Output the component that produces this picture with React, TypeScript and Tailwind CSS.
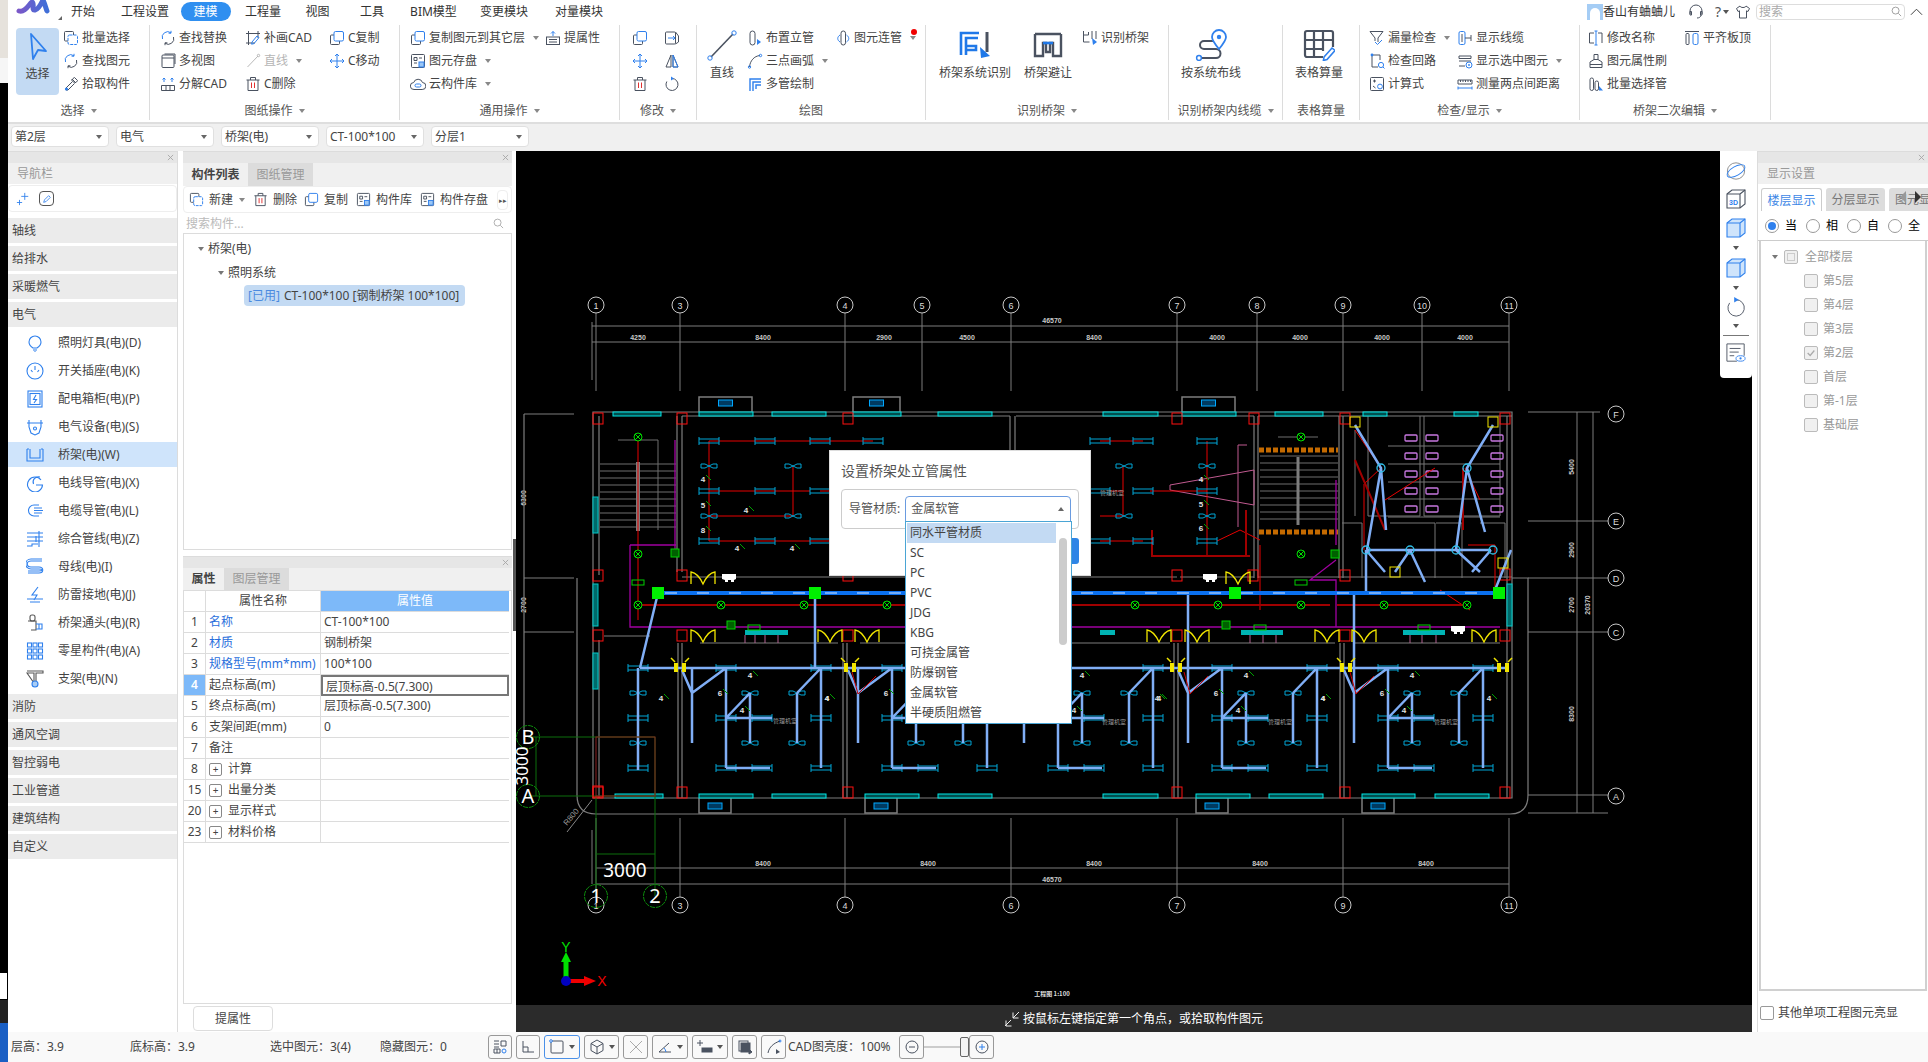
import React from 'react';

const D = '#4a5260';
const B = '#2f80ed';
const R = '#e03030';

/* ---------- small ribbon icons, 16 box ---------- */
const ICONS: Record<string, React.ReactNode> = {
  copy: (<><rect x="1.5" y="5" width="9" height="9.5" rx="1" stroke={D} /><rect x="5" y="1.5" width="9.5" height="9.5" rx="1.5" stroke={B} fill="#fff" /></>),
  batch: (<><rect x="1.5" y="1.5" width="9" height="9.5" rx="1" stroke={D} /><rect x="5" y="5" width="9.5" height="9.5" rx="1.5" stroke={B} fill="#fff" strokeDasharray="3 1" /></>),
  replace: (<><path d="M2.5 9A5.5 5.5 0 0 1 11 2.8M11 .8v2.4H8.6" stroke={B} /><path d="M13.5 7A5.5 5.5 0 0 1 5 13.2M5 15.2v-2.4h2.4" stroke={D} /></>),
  pick: (<><path d="M9 3l4 4M10 2.5l1.5-1 3 3-1 1.5-2 1-3-3zM9.5 5.5L3 12v2h2l6.5-6.5" stroke={D} /><circle cx="3.5" cy="13" r="1.6" fill={B} /></>),
  multi: (<><rect x="2" y="2" width="12" height="12.5" rx="1" stroke={D} /><path d="M2 5h12M4.5 1h10.5v10" stroke={D} /></>),
  explode: (<><path d="M1.5 9.5h13v5h-13zM6 9.5v5M10 9.5v5" stroke={D} /><path d="M4 6V2M2.5 3.5L4 2l1.5 1.5M12 6V2M10.5 3.5L12 2l1.5 1.5" stroke={B} /></>),
  patch: (<><path d="M1 3.5h14M1 13h9M3.5 1v14M13 1v7" stroke={D} /><path d="M7 12l5-6 2 1.6-5 6-2.4.6z" stroke={B} /></>),
  linegray: (<><path d="M2.5 14L13 3" stroke="#b8b8b8" /><circle cx="13.5" cy="2.5" r="1.2" stroke="#b8b8b8" /></>),
  trash: (<><path d="M3 4v10.5h10V4M1.5 4h13M5.5 4V1.5h5V4" stroke={D} /><path d="M6.5 6.5v5.5M9.5 6.5v5.5" stroke={R} /></>),
  move: (<><path d="M8 1v14M1 8h14M6 3l2-2 2 2M6 13l2 2 2-2M3 6L1 8l2 2M13 6l2 2-2 2" stroke={B} /></>),
  mirror: (<><path d="M7 2L2 14h5zM9 2l5 12H9z" stroke={D} /><path d="M9 2l5 12H9z" stroke={B} /></>),
  flip: (<><rect x="1.5" y="2" width="10" height="12" rx="1" stroke={D} /><path d="M4 8h7M9 6l2 2-2 2" stroke={B} /><path d="M11.5 2l3 4v6l-3 2" stroke={D} /></>),
  rotate: (<><path d="M8 2.5a6 6 0 1 1-5.2 3" stroke={D} /><path d="M7 .5L10 2.5 7 4.5z" fill={B} /></>),
  store: (<><rect x="1.5" y="1.5" width="13" height="13" rx="1" stroke={D} /><path d="M4 4.5h3v3H4zM9 5h3M4 10h3" stroke={D} /><rect x="9" y="9" width="5" height="5" fill="#9cc7f5" stroke={B} /></>),
  cloud: (<><path d="M4 13.5a3.5 3.5 0 0 1-.3-7 4.6 4.6 0 0 1 8.8 0 3.5 3.5 0 0 1-.3 7z" stroke={D} /><rect x="5" y="8" width="6" height="3" rx="1.5" stroke={B} /></>),
  attr: (<><path d="M8 6V1.5M6 3.5l2-2 2 2" stroke={B} /><rect x="1.5" y="7" width="13" height="7.5" stroke={D} /><path d="M4 9.5h8M4 12h8" stroke={D} /></>),
  riser: (<><rect x="3" y="1" width="5" height="14" rx="2.5" stroke={D} /><path d="M10 9l4 3-4 3z" fill={B} /></>),
  arc: (<><path d="M2.5 14C3 8 7 3 13 2.5" stroke={D} /><circle cx="13.5" cy="2.5" r="1.2" stroke={B} /><circle cx="2.5" cy="14" r="1.2" stroke={B} /></>),
  multipipe: (<><path d="M3 15V3h11M6 15V6h8M9 13V9h5" stroke={B} strokeWidth="1.4" /></>),
  connect: (<><rect x="6" y="1" width="4.5" height="14" rx="2.2" stroke={D} /><path d="M5 5C2 7 2 10 5 12M11.5 5c3 2 3 5 0 7" stroke={B} /></>),
  trayid: (<><path d="M1.5 5h5v-3M1.5 1v11h6M14 1v8M10 1v8" stroke={D} /><path d="M10 8l5 4-4 3z" fill={B} /></>),
  funnel: (<><path d="M1 1.5h13L9 8v4" stroke={D} /><path d="M6 8L1 1.5M6 8v3" stroke={D} /><path d="M6 12l2.5 2.5L13 10" stroke={B} /></>),
  cable: (<><rect x="2" y="1.5" width="6" height="13" rx="1.5" stroke={B} /><path d="M5 4v8M8 8h6M14 5v6" stroke={D} /></>),
  circuit: (<><path d="M3 2v12h6M3 2h8v5" stroke={D} /><circle cx="3" cy="2" r="1.4" fill={B} /><circle cx="12" cy="12" r="2.6" stroke={B} /><path d="M14 14l1.5 1.5" stroke={B} /></>),
  showsel: (<><path d="M2 3h12M2 3v2.5h12V3M2 8h12M2 13h6" stroke={D} /><circle cx="12" cy="12" r="3" stroke={B} /><circle cx="12" cy="12" r=".9" fill={B} /></>),
  formula: (<><rect x="1.5" y="1.5" width="13" height="13" rx="1" stroke={D} /><path d="M4 5h3M5.5 3.5v3M4 10l2.5 2" stroke={D} /><circle cx="11" cy="10.5" r="2.4" stroke={B} /></>),
  measure: (<><path d="M1 4h14v4H1zM3.5 4v2M6 4v2M8.5 4v2M11 4v2M13.5 4v2" stroke={D} /><path d="M1 12h14M1 10.5v3M15 10.5v3" stroke={B} /></>),
  rename: (<><path d="M6 3H1.5v10H6M10 3h4v10" stroke={D} /><path d="M8 1v14M6.5 1h3M6.5 15h3" stroke={B} /></>),
  brush: (<><path d="M6 1.5h4v5H6zM2 9l4-2.5h4L14 9v5.5H2zM2 11.5h12" stroke={D} /></>),
  alignpipe: (<><path d="M1 1.5h14" stroke={D} /><rect x="2" y="3.5" width="3" height="11" rx="1" stroke={D} /><rect x="9" y="3.5" width="5" height="11" rx="1.5" stroke={B} /></>),
  batchpipe: (<><rect x="2" y="2" width="3.5" height="12.5" rx="1.7" stroke={D} /><rect x="7" y="5" width="3.5" height="9.5" rx="1.7" stroke={D} /><path d="M11 10l4 4.5h-4z" fill={B} /></>),
};

function Ico({ name, className = 'w-4 h-4' }: { name: string; className?: string }) {
  return (
    <svg viewBox="0 0 16 16" fill="none" className={`${className} shrink-0`}>
      {ICONS[name]}
    </svg>
  );
}

function Caret({ className = 'border-t-[#888]' }: { className?: string }) {
  return <span className={`inline-block w-0 h-0 border-x-[3px] border-x-transparent border-t-[4px] ${className}`} />;
}

function Item({ icon, label, caret, muted }: { icon: string; label: string; caret?: boolean; muted?: boolean }) {
  return (
    <div className={`flex items-center h-[22px] gap-[3px] whitespace-nowrap ${muted ? 'text-[#b5b5b5]' : 'text-[#444]'}`}>
      <Ico name={icon} />
      <span>{label}</span>
      {caret && <span className="ml-[5px] flex"><Caret /></span>}
    </div>
  );
}

function Col({ width, items }: { width: string; items: { icon: string; label: string; caret?: boolean; muted?: boolean }[] }) {
  return (
    <div className={`flex flex-col gap-px shrink-0 ${width}`}>
      {items.map((it) => (
        <Item key={it.label} {...it} />
      ))}
    </div>
  );
}

function Group({ width, label, caret = true, children, className = '' }: { width: string; label: string; caret?: boolean; children: React.ReactNode; className?: string }) {
  return (
    <div className={`flex flex-col shrink-0 h-[95px] border-r border-[#dcdcdc] ${width}`}>
      <div className={`flex flex-1 pt-[2px] ${className}`}>{children}</div>
      <div className="h-[19px] flex items-center justify-center gap-[6px] text-[#555] whitespace-nowrap">
        {label}
        {caret && <Caret />}
      </div>
    </div>
  );
}

function BigBtn({ width, label, children }: { width: string; label: string; children: React.ReactNode }) {
  return (
    <div className={`flex flex-col items-center shrink-0 ${width}`}>
      <div className="h-[32px] mt-[2px] flex items-center justify-center">{children}</div>
      <span className="mt-[3px] text-[#444] whitespace-nowrap">{label}</span>
    </div>
  );
}

function Ribbon() {
  return (
    <div className="h-[101px] flex items-start pt-[2px] bg-white border-b-2 border-[#dedede] shrink-0">
      <Group width="w-[142px]" label="选择" className="pl-[8px]">
        <div className="w-[43px] h-[67px] mt-[1px] rounded-sm bg-[#c3daf3] flex flex-col items-center shrink-0 text-[#444]">
          <svg viewBox="0 0 24 32" className="w-[24px] h-[32px] mt-[3px]" fill="none">
            <path d="M5 3l15 17-8-1-5 9z" stroke="#2f80ed" strokeWidth="1.8" strokeLinejoin="round" />
          </svg>
          <span className="mt-[2px]">选择</span>
        </div>
        <div className="ml-[4px]">
          <Col width="w-[80px]" items={[{ icon: 'batch', label: '批量选择' }, { icon: 'replace', label: '查找图元' }, { icon: 'pick', label: '拾取构件' }]} />
        </div>
      </Group>
      <Group width="w-[250px]" label="图纸操作" className="pl-[10px]">
        <Col width="w-[85px]" items={[{ icon: 'replace', label: '查找替换' }, { icon: 'multi', label: '多视图' }, { icon: 'explode', label: '分解CAD' }]} />
        <Col width="w-[84px]" items={[{ icon: 'patch', label: '补画CAD' }, { icon: 'linegray', label: '直线', caret: true, muted: true }, { icon: 'trash', label: 'C删除' }]} />
        <Col width="w-[60px]" items={[{ icon: 'copy', label: 'C复制' }, { icon: 'move', label: 'C移动' }]} />
      </Group>
      <Group width="w-[220px]" label="通用操作" className="pl-[10px]">
        <Col width="w-[135px]" items={[{ icon: 'copy', label: '复制图元到其它层', caret: true }, { icon: 'store', label: '图元存盘', caret: true }, { icon: 'cloud', label: '云构件库', caret: true }]} />
        <Col width="w-[60px]" items={[{ icon: 'attr', label: '提属性' }]} />
      </Group>
      <Group width="w-[77px]" label="修改" className="pl-[12px]">
        <div className="grid grid-cols-2 gap-x-[16px] w-[48px] auto-rows-[22px] gap-y-px items-center">
          <Ico name="copy" /><Ico name="flip" />
          <Ico name="move" /><Ico name="mirror" />
          <Ico name="trash" /><Ico name="rotate" />
        </div>
      </Group>
      <Group width="w-[229px]" label="绘图" caret={false} className="pl-[10px]">
        <BigBtn width="w-[30px]" label="直线">
          <svg viewBox="0 0 30 32" className="w-[30px] h-[32px]" fill="none">
            <path d="M4 28L26 5" stroke={D} strokeWidth="1.6" />
            <circle cx="27" cy="4" r="2.2" stroke={B} /><circle cx="3" cy="29" r="2.2" stroke={B} />
          </svg>
        </BigBtn>
        <div className="w-[10px] shrink-0" />
        <Col width="w-[88px]" items={[{ icon: 'riser', label: '布置立管' }, { icon: 'arc', label: '三点画弧', caret: true }, { icon: 'multipipe', label: '多管绘制' }]} />
        <div className="relative">
          <Col width="w-[80px]" items={[{ icon: 'connect', label: '图元连管', caret: true }]} />
          <span className="absolute left-[76px] top-[2px] w-[6px] h-[6px] rounded-full bg-[#f00000]" />
        </div>
      </Group>
      <Group width="w-[243px]" label="识别桥架" className="pl-[13px]">
        <BigBtn width="w-[72px]" label="桥架系统识别">
          <svg viewBox="0 0 32 32" className="w-[32px] h-[32px]" fill="none">
            <path d="M2 26V4h18M7 26V9h12M7 17h10v4h-10" stroke="#1f78e8" strokeWidth="2.6" />
            <path d="M28 3v20" stroke={D} strokeWidth="3" />
            <path d="M21 18l10 9-9 2z" fill="#1f78e8" />
          </svg>
        </BigBtn>
        <div className="w-[13px] shrink-0" />
        <BigBtn width="w-[48px]" label="桥架避让">
          <svg viewBox="0 0 32 32" className="w-[32px] h-[32px]" fill="none">
            <path d="M3 5h26M3 5v22h8V14h3v9h4v-9h3v13h8V5" stroke={D} strokeWidth="2.4" />
            <path d="M11 14h10" stroke="#1f78e8" strokeWidth="2.6" />
          </svg>
        </BigBtn>
        <div className="w-[10px] shrink-0" />
        <Col width="w-[70px]" items={[{ icon: 'trayid', label: '识别桥架' }]} />
      </Group>
      <Group width="w-[114px]" label="识别桥架内线缆" className="pl-[12px]">
        <BigBtn width="w-[60px]" label="按系统布线">
          <svg viewBox="0 0 32 32" className="w-[32px] h-[32px]" fill="none">
            <path d="M4 29h17a4 4 0 0 0 0-9H9a4 4 0 0 1 0-8h9" stroke={D} strokeWidth="2" />
            <circle cx="4" cy="29" r="2.4" stroke={B} strokeWidth="1.5" fill="#fff" />
            <path d="M24 20c-5-6-7-9-7-12a7 7 0 0 1 14 0c0 3-2 6-7 12z" stroke={B} strokeWidth="1.8" fill="#fff" />
            <circle cx="24" cy="8" r="2.2" fill={B} />
          </svg>
        </BigBtn>
      </Group>
      <Group width="w-[77px]" label="表格算量" caret={false} className="justify-center pr-[4px]">
        <BigBtn width="w-[50px]" label="表格算量">
          <svg viewBox="0 0 32 32" className="w-[32px] h-[32px]" fill="none">
            <path d="M20 28H4a2 2 0 0 1-2-2V4a2 2 0 0 1 2-2h24a2 2 0 0 1 2 2v14M2 11h28M2 20h19M11 2v26M20 2v20" stroke={D} strokeWidth="2.2" />
            <path d="M21 28l8-9 3 2.5-8 9-3.6 1z" stroke={B} strokeWidth="1.6" />
          </svg>
        </BigBtn>
      </Group>
      <Group width="w-[220px]" label="检查/显示" className="pl-[9px]">
        <Col width="w-[88px]" items={[{ icon: 'funnel', label: '漏量检查', caret: true }, { icon: 'circuit', label: '检查回路' }, { icon: 'formula', label: '计算式' }]} />
        <Col width="w-[118px]" items={[{ icon: 'cable', label: '显示线缆' }, { icon: 'showsel', label: '显示选中图元', caret: true }, { icon: 'measure', label: '测量两点间距离' }]} />
      </Group>
      <Group width="w-[191px]" label="桥架二次编辑" className="pl-[8px]">
        <Col width="w-[96px]" items={[{ icon: 'rename', label: '修改名称' }, { icon: 'brush', label: '图元属性刷' }, { icon: 'batchpipe', label: '批量选择管' }]} />
        <Col width="w-[80px]" items={[{ icon: 'alignpipe', label: '平齐板顶' }]} />
      </Group>
    </div>
  );
}

const MENU = [
  { t: '开始', w: 'w-[62px]' },
  { t: '工程设置', w: 'w-[62px]' },
  { t: '建模', w: 'w-[59px]', active: true },
  { t: '工程量', w: 'w-[56px]' },
  { t: '视图', w: 'w-[53px]' },
  { t: '工具', w: 'w-[56px]' },
  { t: 'BIM模型', w: 'w-[67px]' },
  { t: '变更模块', w: 'w-[74px]' },
  { t: '对量模块', w: 'w-[76px]' },
];

function MenuBar() {
  return (
    <div className="h-[23px] flex items-center bg-white shrink-0">
      <div className="w-[44px] h-full relative shrink-0">
        <svg viewBox="0 0 34 18" className="absolute left-[8px] top-0 w-[34px] h-[18px]" fill="none">
          <defs>
            <linearGradient id="logo" x1="0" y1="0" x2="1" y2="0">
              <stop offset="0" stopColor="#7a58c8" /><stop offset="1" stopColor="#3f6fd8" />
            </linearGradient>
          </defs>
          <path d="M3 11C9 13 13 4 16 2c3 1-1 9 3 8 4-1 6-6 8-10 2 4 3 9 4 11" stroke="url(#logo)" strokeWidth="5" strokeLinecap="round" />
        </svg>
        <span className="absolute right-[-10px] bottom-[3px] w-0 h-0 border-l-[4px] border-l-transparent border-b-[4px] border-b-[#666]" />
      </div>
      {MENU.map((m) => (
        <div key={m.t} className={`${m.w} flex justify-center shrink-0 text-[#333]`}>
          {m.active ? <span className="w-[50px] h-[19px] rounded-[10px] bg-[#2f8ff0] text-white text-center leading-[19px]">{m.t}</span> : m.t}
        </div>
      ))}
      <div className="ml-auto flex items-center">
        <div className="w-[16px] h-[16px] bg-[#a5cdf5] flex items-end justify-center overflow-hidden">
          <span className="w-[10px] h-[12px] rounded-t-full bg-white" />
        </div>
        <span className="w-[72px] text-[#333] text-center whitespace-nowrap">香山有蛐蛐儿</span>
        <svg viewBox="0 0 16 16" className="w-4 h-4 ml-[13px]" fill="none" stroke={D}>
          <path d="M2 10V7a6 6 0 0 1 12 0v3M2 7.5h1.5V11H2zM12.5 7.5H14V11h-1.5zM13 11c0 2-2 3-4 3" />
        </svg>
        <span className="ml-[11px] text-[14px] text-[#555]">?</span>
        <span className="ml-[2px] flex"><Caret className="border-t-[#555]" /></span>
        <svg viewBox="0 0 16 16" className="w-4 h-4 ml-[6px]" fill="none" stroke={D}>
          <path d="M5 2L1.5 4.5 3 7.5l1.5-.7V14h7V6.8l1.5.7 1.500-3L11 2c-.5 2-5.500 2-6 0z" />
        </svg>
        <div className="ml-[5px] w-[149px] h-[16px] rounded-sm border border-[#ddd] flex items-center justify-between px-[2px] text-[#aaa]">
          搜索
          <svg viewBox="0 0 12 12" className="w-[11px] h-[11px]" fill="none" stroke="#999">
            <circle cx="5" cy="5" r="3.8" /><path d="M8 8l3 3" />
          </svg>
        </div>
        <div className="w-[23px] flex justify-center">
          <svg viewBox="0 0 14 8" className="w-[13px] h-[8px]" fill="none" stroke="#333"><path d="M1 7l6-6 6 6" /></svg>
        </div>
      </div>
    </div>
  );
}

function ComboBar() {
  const combos = ['第2层', '电气', '桥架(电)', 'CT-100*100', '分层1'];
  return (
    <div className="h-[27px] bg-[#f0f0f0] flex items-start pt-[2px] pl-[3px] gap-[7px] shrink-0">
      {combos.map((c) => (
        <div key={c} className="w-[98px] h-[21px] px-[3px] rounded-sm bg-white border border-[#e0e0e0] flex items-center justify-between text-[#444]">
          {c}
          <span className="mr-[3px] flex"><Caret className="border-t-[#666]" /></span>
        </div>
      ))}
    </div>
  );
}

/* ---------- navigation ---------- */
const NAV_ICON: Record<string, React.ReactNode> = {
  bulb: <><path d="M7 14c-3-2-4-4-4-6a6 6 0 0 1 12 0c0 2-1 4-4 6z" /><path d="M7 16h4M8 18h2" /></>,
  socket: <><circle cx="9" cy="9" r="8" /><path d="M9 4v4M5 8l1.500 2M13 8l-1.500 2" /></>,
  box: <><rect x="2" y="1" width="14" height="16" /><rect x="4" y="3.500" width="10" height="11" /><path d="M10 5L7.500 9.500h3L8 13" /></>,
  device: <><path d="M1 5h16M3 5V2M15 5V2M3 5v4l2 6 4 2 4-2 2-6V5" /><circle cx="9" cy="10.500" r="1.500" /></>,
  tray: <><path d="M1 3v12h16V3M1 3h2M15 3h2M4 3v9h10V3" /></>,
  conduit: <><path d="M15 6a7.500 7.500 0 1 0 1.500 5H10" /><path d="M14 3C9 2 6 6 7.500 10" /></>,
  cable: <><path d="M13 3H8a5 5 0 0 0 0 11h5M8 8.500h9M8 6h8M8 11h8" /></>,
  combo: <><path d="M1 3h16M1 7h16M1 11h16M1 16h5v-2h6M13 1v16M10 6v6" /></>,
  bus: <><path d="M16 3H5c-5 0-5 6 0 6h8c5 0 5 6 0 6H2" /><path d="M16 1H5C-2 1-2 11 5 11h8c5 0 3 2 0 2H2" /></>,
  bolt: <><path d="M12 1L6 9h5l-3 5M1 13h16M4 16h10" /></>,
  joint: <><rect x="4" y="1" width="5" height="6" rx="2" stroke="#555" /><path d="M2 7h8v9H5" stroke="#555" /><path d="M10 10h6v5h-6M13 10v5" /></>,
  grid: <><rect x="1.500" y="1" width="4" height="4" /><rect x="7" y="1" width="4" height="4" /><rect x="12.500" y="1" width="4" height="4" /><rect x="1.500" y="7" width="4" height="4" /><rect x="7" y="7" width="4" height="4" /><rect x="12.500" y="7" width="4" height="4" /><rect x="1.500" y="13" width="4" height="4" /><rect x="7" y="13" width="4" height="4" /><rect x="12.500" y="13" width="4" height="4" /></>,
  bracket: <><path d="M1 1h16v2h-7v10M8 13V3H1z" stroke="#555" /><circle cx="9" cy="14" r="3" fill="#a9cdf5" /></>,
};

const NAV_ITEMS = [
  { icon: 'bulb', t: '照明灯具(电)(D)' },
  { icon: 'socket', t: '开关插座(电)(K)' },
  { icon: 'box', t: '配电箱柜(电)(P)' },
  { icon: 'device', t: '电气设备(电)(S)' },
  { icon: 'tray', t: '桥架(电)(W)', on: true },
  { icon: 'conduit', t: '电线导管(电)(X)' },
  { icon: 'cable', t: '电缆导管(电)(L)' },
  { icon: 'combo', t: '综合管线(电)(Z)' },
  { icon: 'bus', t: '母线(电)(I)' },
  { icon: 'bolt', t: '防雷接地(电)(J)' },
  { icon: 'joint', t: '桥架通头(电)(R)' },
  { icon: 'grid', t: '零星构件(电)(A)' },
  { icon: 'bracket', t: '支架(电)(N)' },
];

function TitleBar() {
  return (
    <div className="h-[12px] bg-[#e6e6e6] flex items-center justify-end pr-[3px] shrink-0 border-t border-[#dcdcdc]">
      <svg viewBox="0 0 8 8" className="w-[7px] h-[7px]" fill="none" stroke="#a5a5a5"><path d="M1 1l6 6M7 1L1 7" /></svg>
    </div>
  );
}

function Section({ t }: { t: string }) {
  return <div className="h-[25px] bg-[#ebebeb] pl-[4px] leading-[25px] text-[#444]">{t}</div>;
}

function NavPanel() {
  return (
    <div className="w-[170px] flex flex-col shrink-0 border-r border-[#dcdcdc]">
      <TitleBar />
      <div className="h-[21px] bg-[#f0f0f0] pl-[9px] leading-[21px] text-[#999] shrink-0">导航栏</div>
      <div className="h-[27px] mt-px rounded-sm border border-[#eee] flex items-center pl-[7px] gap-[9px] shrink-0">
        <svg viewBox="0 0 16 16" className="w-[14px] h-[14px]" fill="none" stroke={B}><path d="M10 1v8M6 5h8M4 9v6M1 12h6" /></svg>
        <span className="w-[15px] h-[15px] rounded-sm border border-[#555] flex items-center justify-center">
          <svg viewBox="0 0 12 12" className="w-[10px] h-[10px]" fill="none" stroke={B}><path d="M2 10l1-3 5-5 2 2-5 5z" /></svg>
        </span>
      </div>
      <div className="flex flex-col gap-[3px] mt-[6px]">
        {['轴线', '给排水', '采暖燃气', '电气'].map((t) => <Section key={t} t={t} />)}
        {NAV_ITEMS.map((n) => (
          <div key={n.t} className={`h-[25px] flex items-center pl-[18px] gap-[14px] text-[#444] ${n.on ? 'bg-[#cfe4fb]' : ''}`}>
            <svg viewBox="0 0 18 18" className="w-[18px] h-[18px] shrink-0" fill="none" stroke={B} strokeWidth="1.100">{NAV_ICON[n.icon]}</svg>
            {n.t}
          </div>
        ))}
        {['消防', '通风空调', '智控弱电', '工业管道', '建筑结构', '自定义'].map((t) => <Section key={t} t={t} />)}
      </div>
    </div>
  );
}

/* ---------- component list and properties ---------- */
const PROPS = [
  { n: '1', k: '名称', v: 'CT-100*100', blue: true },
  { n: '2', k: '材质', v: '钢制桥架', blue: true },
  { n: '3', k: '规格型号(mm*mm)', v: '100*100', blue: true },
  { n: '4', k: '起点标高(m)', v: '层顶标高-0.5(7.300)', sel: true },
  { n: '5', k: '终点标高(m)', v: '层顶标高-0.5(7.300)' },
  { n: '6', k: '支架间距(mm)', v: '0' },
  { n: '7', k: '备注', v: '' },
  { n: '8', k: '计算', v: '', plus: true },
  { n: '15', k: '出量分类', v: '', plus: true },
  { n: '20', k: '显示样式', v: '', plus: true },
  { n: '23', k: '材料价格', v: '', plus: true },
];

function ToolBtn({ icon, label, className }: { icon: string; label: string; className: string }) {
  return (
    <div className={`flex items-center gap-[5px] shrink-0 text-[#444] ${className}`}>
      <Ico name={icon} className="w-[15px] h-[15px]" />
      {label}
    </div>
  );
}

function MiddlePanel() {
  return (
    <div className="w-[329px] flex flex-col shrink-0">
      <TitleBar />
      <div className="h-[23px] bg-[#f0f0f0] flex shrink-0">
        <div className="w-[65px] font-semibold text-center leading-[23px] text-[#444]">构件列表</div>
        <div className="w-[65px] bg-[#dcdcdc] text-center leading-[23px] text-[#999]">图纸管理</div>
      </div>
      <div className="h-[27px] flex items-center pl-[5px] rounded-sm border border-[#eee] shrink-0 relative">
        <ToolBtn icon="batch" label="新建" className="w-[64px]" />
        <span className="absolute left-[55px] flex"><Caret /></span>
        <ToolBtn icon="trash" label="删除" className="w-[51px]" />
        <ToolBtn icon="copy" label="复制" className="w-[52px]" />
        <ToolBtn icon="store" label="构件库" className="w-[64px]" />
        <ToolBtn icon="store" label="构件存盘" className="w-[75px]" />
        <span className="w-[11px] h-[20px] ml-[2px] rounded-sm border border-[#eee] text-[#555] text-[7px] leading-[20px] text-center">▸▸</span>
      </div>
      <div className="h-[19px] mt-px flex items-center justify-between px-[3px] text-[#bbb] shrink-0">
        搜索构件...
        <svg viewBox="0 0 12 12" className="w-[11px] h-[11px] mr-[5px]" fill="none" stroke="#aaa"><circle cx="5" cy="5" r="3.800" /><path d="M8 8l3 3" /></svg>
      </div>
      <div className="h-[317px] border border-[#dcdcdc] flex flex-col pt-[3px] shrink-0 text-[#444]">
        <div className="h-[24px] flex items-center pl-[14px] gap-[4px]"><Caret className="border-t-[#777]" />桥架(电)</div>
        <div className="h-[24px] flex items-center pl-[34px] gap-[4px]"><Caret className="border-t-[#777]" />照明系统</div>
        <div className="ml-[60px] w-[221px] h-[21px] rounded-sm bg-[#c3daf3] flex items-center pl-[4px] gap-[4px] whitespace-nowrap">
          <span className="text-[#4a8ae0]">[已用]</span>CT-100*100 [钢制桥架 100*100]
        </div>
      </div>
      <div className="mt-[6px]"><TitleBar /></div>
      <div className="h-[22px] bg-[#f0f0f0] flex shrink-0">
        <div className="w-[41px] font-semibold text-center leading-[22px] text-[#444]">属性</div>
        <div className="w-[65px] bg-[#dcdcdc] text-center leading-[22px] text-[#999]">图层管理</div>
      </div>
      <div className="h-[414px] border border-[#dcdcdc] shrink-0 pr-[2px]">
        <div className="grid grid-cols-[22px_115px_188px] auto-rows-[21px] text-[#444]">
          <div className="border-b border-r border-[#dcdcdc]" />
          <div className="border-b border-r border-[#dcdcdc] text-center leading-[20px]">属性名称</div>
          <div className="bg-[#7db9f9] border-b border-[#dcdcdc] text-center text-white leading-[20px]">属性值</div>
          {PROPS.map((p) => (
            <React.Fragment key={p.n}>
              <div className={`border-b border-r border-[#dcdcdc] text-center leading-[20px] ${p.sel ? 'bg-[#7db9f9] text-white font-semibold' : ''}`}>{p.n}</div>
              <div className={`border-b border-r border-[#dcdcdc] pl-[3px] flex items-center whitespace-nowrap ${p.blue ? 'text-[#2a6fdc]' : ''}`}>
                {p.plus && (
                  <span className="w-[13px] h-[13px] mr-[6px] rounded-[2px] border border-[#888] text-[10px] leading-[10px] text-center">+</span>
                )}
                {p.k}
              </div>
              <div className={`pl-[3px] leading-[19px] whitespace-nowrap ${p.sel ? 'border-2 border-[#777] leading-[17px] pl-[2px]' : 'border-b border-[#dcdcdc]'}`}>{p.v}</div>
            </React.Fragment>
          ))}
        </div>
      </div>
      <div className="mt-[2px] ml-[10px] w-[80px] h-[25px] rounded-sm border border-[#ddd] text-center leading-[23px] text-[#444] shrink-0">提属性</div>
    </div>
  );
}

/* ---------- CAD drawing, coordinates are screen pixels ---------- */
const AXIS_X = [596, 680, 845, 922, 1011, 1177, 1257, 1343, 1422, 1509];
const AXIS_T = ['1', '3', '4', '5', '6', '7', '8', '9', '10', '11'];
const AXIS_B = [0, 1, 2, 4, 5, 7, 9];
const GRAY = '#7d7d7d';

const WIN_TOP = [[613, 661], [699, 753], [772, 826], [853, 901], [938, 992], [1103, 1158], [1182, 1236], [1275, 1323], [1363, 1387], [1454, 1478]];
const WIN_BOT = [[615, 663], [699, 753], [772, 826], [865, 919], [938, 992], [1103, 1158], [1196, 1250], [1269, 1323], [1362, 1415], [1435, 1489]];
const COLS = [[598, 418], [682, 418], [848, 418], [1177, 418], [1254, 418], [1345, 418], [1505, 418], [598, 575], [682, 575], [848, 575], [1177, 575], [1253, 575], [1345, 575], [1505, 574], [598, 635], [682, 635], [848, 635], [1177, 635], [1345, 635], [1505, 635], [598, 792], [682, 792], [848, 792], [1177, 792], [1345, 792], [1505, 792]];
const BOX_TOP = [[699, 752], [853, 900], [1182, 1235]];
const BOX_BOT = [[699, 731], [865, 897], [1196, 1228], [1362, 1394]];
const MODULES = [692, 858, 1024, 1188, 1354];
const LAMPS = [638, 721, 804, 887, 1135, 1218, 1301, 1384, 1467];
const DOORS = [[691, 630], [818, 630], [855, 630], [987, 630], [1147, 630], [1185, 630], [1315, 630], [1352, 630], [1472, 630], [691, 572], [1226, 572]];
const TEAL = [[745, 788], [1100, 1115], [1241, 1283], [1403, 1445]];
const PURPLE_X = [1405, 1426, 1491];
const PURPLE_Y = [438, 456, 474, 491, 509];
const ROOM_LABELS = [[785, 723], [1114, 724], [1280, 724], [1446, 724], [1112, 495]];
const UPPER_NUMS = [[703, 482, '4'], [703, 508, '5'], [703, 533, '8'], [746, 513, '4'], [737, 551, '4'], [792, 551, '4'], [1201, 482, '4'], [1201, 507, '5'], [1201, 531, '6']];

function beam(x: number, y: number) {
  return `M${x - 10} ${y - 2}H${x + 10}M${x - 10} ${y + 2}H${x + 10}M${x - 10} ${y - 4}V${y + 4}M${x + 10} ${y - 4}V${y + 4}`;
}
function bow(x: number, y: number) {
  return `M${x - 8} ${y - 2}H${x - 4}L${x + 4} ${y + 2}H${x + 8}V${y - 2}H${x + 4}L${x - 4} ${y + 2}H${x - 8}Z`;
}

function moduleLines() {
  let blue = 'M640 668H1505';
  let cy = '';
  MODULES.forEach((x) => {
    blue += `M${x} 668V743M${x + 34} 668V768M${x + 34} 718H${x + 80}M${x + 34} 768H${x + 78}M${x + 58} 693V743M${x + 105} 693V743M${x + 129} 668V768`;
    blue += `M${x} 693L${x + 34} 668M${x + 34} 718L${x + 58} 693M${x + 105} 693L${x + 129} 668M${x - 10} 670L${x} 693`;
    [[x + 34, 668], [x + 34, 718], [x + 34, 768], [x + 70, 768], [x + 129, 668], [x + 129, 718], [x + 129, 768], [x + 70, 718]].forEach(([a, b]) => { cy += beam(a, b); });
    [[x + 58, 693], [x + 58, 743], [x + 105, 693], [x + 105, 743]].forEach(([a, b]) => { cy += bow(a, b); });
  });
  blue += 'M638 668V770';
  [668, 718, 768].forEach((y) => { cy += beam(638, y); });
  [693, 743].forEach((y) => { cy += bow(638, y); });
  return { blue, cy };
}

function Dim({ x, y, t, r }: { x: number; y: number; t: string; r?: boolean }) {
  return <text x={x} y={y} fill="#c8c8c8" fontSize="7" fontWeight="700" textAnchor="middle" fontFamily="Liberation Sans, sans-serif" transform={r ? `rotate(-90 ${x} ${y})` : undefined}>{t}</text>;
}

function Bubble({ x, y, t }: { x: number; y: number; t: string }) {
  return (
    <g>
      <circle cx={x} cy={y} r="8" stroke="#c8c8c8" fill="#000" />
      <text x={x} y={y + 3.500} fill="#ddd" fontSize="9" textAnchor="middle" fontFamily="Liberation Sans, sans-serif">{t}</text>
    </g>
  );
}

function Num({ x, y, t }: { x: number; y: number; t: string }) {
  return (
    <g>
      <text x={x} y={y} fill="#e0e0e0" fontSize="8" fontWeight="700" textAnchor="middle" fontFamily="Liberation Sans, sans-serif">{t}</text>
      <path d={`M${x + 3} ${y - 7}l5 5`} stroke="#00a000" />
    </g>
  );
}

function CadDrawing() {
  const { blue, cy } = moduleLines();
  const walls =
    'M593 412H1512V798H593ZM599 416V575M677 416V572M682 416V572M682 416H1010M1016 416H1254M1258 416H1512' +
    'M1010 416V575M1015 416V575M1254 416V578M1258 416V578M1339 416V578M1343 416V578M1507 416V798' +
    'M682 577H1010M1015 577H1177M1180 577H1254M1258 577H1512' +
    'M599 640V798M604 636H650M678 643V798M682 643V798M843 643V798M847 643V798M1174 643V798M1178 643V798M1340 643V798M1344 643V798' +
    'M700 643H838M860 643H1000M1020 643H1170M1190 643H1335M1355 643H1500' +
    'M577 578V795Q577 814 596 814H1510Q1528 814 1528 795V578H1512M524 414H574M524 578H574M524 632H574M524 414V740';
  const right =
    'M1528 412H1600M1528 521H1608M1528 578H1608M1528 632H1608M1528 795H1608M1528 813H1608M1577 412V813M1593 412V813' +
    'M592 326H1509M592 342H1509M592 322V380M596 868H1509M596 884H1509M592 830V884';
  let stairs = '';
  for (let y = 464; y <= 530; y += 7) stairs += `M600 ${y}H676`;
  for (let y = 456; y <= 525; y += 7) stairs += `M1260 ${y}H1338`;
  stairs += 'M618 440H658V530M1278 437H1318';
  let bath = 'M1368 416V516H1420V416M1424 416V516H1500V416M1355 430V516M1342 523H1362V578M1390 523H1435V578M1436 523H1462V578M1480 523H1505V578';
  PURPLE_Y.forEach((y) => { bath += `M1388 ${y + 8}H1500`; });
  const reds = 'M709 441H873M709 441V541M709 491H810M709 516H793M793 466V516M709 541H873M638 440V620M820 491H873' +
    'M1100 441H1143M1207 441V555M1100 541H1143M1123 466V516M1100 516H1123M1123 491H1110M1150 491H1207M1217 541L1240 530 1260 540' +
    'M1355 430L1381 468 1364 484V550M1435 468 1385 500M1465 468L1480 500M1468 545H1495V590M1440 590L1470 610M1260 545V610';
  const darkred = 'M638 605H1330M1337 605H1467M1152 530V556H1250M1246 510V556M1355 460L1385 530M1463 468V530';
  const lightBlue = 'M1355 425L1381 468 1367 550M1381 468L1386 530M1366 550H1491M1366 550V593M1467 468L1456 550M1493 425L1467 468 1485 532M1366 550L1385 572M1410 550L1395 572M1410 550L1425 582M1456 550L1480 572M1491 550L1472 572M1511 550L1495 590' +
    'M1188 593V668M1354 593V668M815 593V668M658 593L640 668';
  return (
    <svg viewBox="516 151 1236 854" className="block w-full h-full" fill="none">
      <path d={right} stroke={GRAY} />
      {AXIS_X.map((x) => <path key={x} d={`M${x} 313V391`} stroke={GRAY} />)}
      {AXIS_B.map((i) => <path key={i} d={`M${AXIS_X[i]} 818V897`} stroke={GRAY} />)}
      {AXIS_X.map((x, i) => <Bubble key={x} x={x} y={305} t={AXIS_T[i]} />)}
      {AXIS_B.map((i) => <Bubble key={i} x={AXIS_X[i]} y={905} t={AXIS_T[i]} />)}
      {[['F', 414], ['E', 521], ['D', 578], ['C', 632], ['A', 796]].map(([t, y]) => <Bubble key={t as string} x={1616} y={y as number} t={t as string} />)}
      {[[638, '4250'], [763, '8400'], [884, '2900'], [967, '4500'], [1094, '8400'], [1217, '4000'], [1300, '4000'], [1382, '4000'], [1465, '4000']].map(([x, t]) => <Dim key={t as string + x} x={x as number} y={340} t={t as string} />)}
      <Dim x={1052} y={323} t="46570" />
      <Dim x={763} y={866} t="8400" /><Dim x={928} y={866} t="8400" /><Dim x={1094} y={866} t="8400" /><Dim x={1260} y={866} t="8400" /><Dim x={1426} y={866} t="8400" />
      <Dim x={1052} y={882} t="46570" />
      <Dim x={526} y={498} t="6300" r /><Dim x={526} y={605} t="2700" r /><Dim x={1574} y={467} t="5400" r /><Dim x={1574} y={550} t="2900" r /><Dim x={1574} y={605} t="2700" r /><Dim x={1574} y={714} t="8300" r /><Dim x={1590} y={605} t="20370" r />
      <path d={walls} stroke={GRAY} strokeWidth="1.200" />
      <path d={stairs} stroke="#6f6f6f" />
      <path d="M638 462V531" stroke={GRAY} strokeWidth="4" />
      <path d="M1298 457V525" stroke={GRAY} strokeWidth="3" />
      {[450, 532].map((y) => <path key={y} d={`M1259 ${y}H1338`} stroke="#c46a00" strokeWidth="5" strokeDasharray="5 2" />)}
      <path d={bath} stroke="#777" />
      {PURPLE_X.map((x) => PURPLE_Y.map((y) => <rect key={`${x}${y}`} x={x} y={y - 3} width="12" height="6" rx="1" stroke="#c878e0" strokeWidth="1.300" />))}
      {BOX_TOP.map(([a, b]) => (
        <g key={a}>
          <path d={`M${a} 412V397H${b}V412`} stroke={GRAY} strokeWidth="1.500" />
          <rect x={(a + b) / 2 - 7} y="400" width="14" height="6" stroke="#00a8ff" fill="#003a60" />
        </g>
      ))}
      {BOX_BOT.map(([a, b]) => (
        <g key={a}>
          <path d={`M${a} 798V813H${b}V798`} stroke={GRAY} strokeWidth="1.500" />
          <rect x={(a + b) / 2 - 7} y="803" width="14" height="6" stroke="#00a8ff" fill="#003a60" />
        </g>
      ))}
      {WIN_TOP.map(([a, b]) => <rect key={a} x={a} y="412" width={b - a} height="4" stroke="#00e8e8" fill="#004f4f" />)}
      {WIN_BOT.map(([a, b]) => <rect key={a} x={a} y="794" width={b - a} height="4" stroke="#00e8e8" fill="#004f4f" />)}
      {[[497, 533], [584, 626], [653, 689]].map(([a, b]) => <rect key={a} x="593" y={a} width="5" height={b - a} stroke="#00c8c8" fill="#006a6a" />)}
      <rect x="1507" y="584" width="5" height="42" stroke="#00c8c8" fill="#006a6a" />
      {TEAL.map(([a, b]) => <rect key={a} x={a} y="630" width={b - a} height="5" fill="#00b4b4" />)}
      <path d="M745 635V643M755 635V643M765 635V643M778 635V643M1250 635V643M1263 635V643M1276 635V643M1410 635V643M1422 635V643M1436 635V643" stroke="#b06090" />
      <path d="M1170 485L1254 470V505L1170 490ZM1238 445V527M1238 445H1247" stroke="#c05a90" />
      {COLS.map(([x, y]) => <rect key={`${x}-${y}`} x={x - 5} y={y - 5} width="10" height="11" stroke="#ff1010" />)}
      <path d={reds} stroke="#e80000" />
      <path d={darkred} stroke="#a00000" strokeWidth="2" />
      <path d="M630 545V627H1170M1190 627H1500M630 545H676M675 440V550M1336 480V545M1336 560L1310 580H1336V627" stroke="#a000a0" strokeWidth="1.300" />
      {[[709, 441], [765, 441], [820, 441], [873, 441], [709, 491], [765, 491], [820, 491], [873, 491], [709, 541], [765, 541], [820, 541], [873, 541], [1143, 441], [1207, 441], [1143, 491], [1207, 491], [1143, 541], [1207, 541], [1100, 441], [1100, 491], [1100, 541]].map(([x, y]) => <path key={`${x}-${y}`} d={beam(x, y)} stroke="#00a6d6" />)}
      {[[709, 466], [793, 466], [709, 516], [793, 516], [1124, 466], [1207, 466], [1124, 516], [1207, 516]].map(([x, y]) => <path key={`${x}-${y}`} d={bow(x, y)} stroke="#00a6d6" />)}
      <path d={cy} stroke="#00a6d6" />
      <path d={blue} stroke="#80aef5" strokeWidth="2.500" />
      <path d={lightBlue} stroke="#80aef5" strokeWidth="2.500" />
      {/* yellow fixtures sitting on the column lines of the lower rooms */}
      {[680, 850, 1176, 1346, 1503].map((x) => (
        <g key={x}>
          <rect x={x - 6} y="663" width="4" height="9" fill="#f2e600" />
          <rect x={x + 2} y="663" width="4" height="9" fill="#f2e600" />
          <path d={`M${x - 9} 658l4 4M${x + 9} 658l-4 4`} stroke="#f2e600" strokeWidth="1.500" />
        </g>
      ))}
      {[846, 1012, 1178, 1344].map((x) => <path key={x} d={`M${x + 6} 672L${x + 12} 694 ${x + 30} 676`} stroke="#c80000" />)}
      {MODULES.flatMap((x) => [[x + 28, 696, '6'], [x + 50, 713, '4'], [x + 135, 701, '4'], [x - 31, 701, '4'], [x + 58, 678, '4']].map(([a, b, t]) => <Num key={`${x}-${a}-${b}`} x={a as number} y={b as number} t={t as string} />))}
      {UPPER_NUMS.map(([x, y, t]) => <Num key={`${x}-${y}`} x={x as number} y={y as number} t={t as string} />)}
      {ROOM_LABELS.map(([x, y]) => <text key={`${x}-${y}`} x={x} y={y} fill="#9a9a9a" fontSize="6" textAnchor="middle" fontFamily="Noto Sans CJK SC, sans-serif">管理机室</text>)}
      {DOORS.map(([x, y]) => <path key={`${x}-${y}`} d={`M${x} ${y + 12}V${y}Q${x + 7} ${y + 1} ${x + 12} ${y + 12}Q${x + 17} ${y + 1} ${x + 24} ${y}V${y + 12}`} stroke="#f2e600" strokeWidth="1.300" />)}
      <path d="M653 593H1495" stroke="#0a70f0" strokeWidth="4" />
      <path d="M665 593H1490" stroke="#d8e8ff" strokeDasharray="12 20" />
      {[658, 815, 1235, 1499].map((x) => <rect key={x} x={x - 6} y="587" width="12" height="12" fill="#00f000" />)}
      {LAMPS.map((x) => (
        <g key={x}>
          <circle cx={x} cy="605" r="4" fill="#000" stroke="#00e000" />
          <path d={`M${x - 3} 602l6 6M${x + 3} 602l-6 6`} stroke="#00e000" />
        </g>
      ))}
      {[[638, 437], [638, 554], [1301, 437], [1301, 554]].map(([x, y]) => (
        <g key={`${x}-${y}`}>
          <circle cx={x} cy={y} r="4" fill="#000" stroke="#00e000" />
          <path d={`M${x - 3} ${y - 3}l6 6M${x + 3} ${y - 3}l-6 6`} stroke="#00e000" />
        </g>
      ))}
      {[[1381, 468], [1467, 468], [1366, 550], [1410, 550], [1456, 550], [1493, 550]].map(([x, y]) => <circle key={`${x}-${y}`} cx={x} cy={y} r="4" stroke="#30c0e8" strokeWidth="1.300" />)}
      {[[675, 553], [731, 625], [1335, 554], [1226, 625]].map(([x, y]) => <rect key={`${x}-${y}`} x={x - 4} y={y - 4} width="8" height="8" stroke="#00d000" fill="#006000" />)}
      {[[754, 627], [638, 582], [1301, 582], [1260, 627], [1424, 627]].map(([x, y]) => <rect key={`${x}-${y}`} x={x - 6} y={y - 2} width="12" height="5" stroke="#00d000" />)}
      {[[729, 578], [1210, 578], [1458, 630]].map(([x, y]) => <path key={`${x}-${y}`} d={`M${x - 7} ${y - 4}h14v5l-2 1v2h-3v-2h-3v2h-3v-2l-3-1z`} fill="#fff" />)}
      {[[1355, 422], [1493, 422], [1395, 572], [1503, 563]].map(([x, y]) => <rect key={`${x}-${y}`} x={x - 5} y={y - 5} width="10" height="10" stroke="#f2e600" />)}
      {/* green axis overlay */}
      <path d="M528 737H655M528 796H655M536 737V796M596 796V896M655 737V896M596 854H655" stroke="#0c6e0c" />
      <rect x="596" y="737" width="59" height="59" stroke="#8a2020" />
      <rect x="593" y="786" width="10" height="11" stroke="#ff1010" />
      {[['B', 528, 737], ['A', 528, 796], ['1', 596, 896], ['2', 655, 896]].map(([t, x, y]) => (
        <g key={t as string}>
          <circle cx={x as number} cy={y as number} r="11.500" stroke="#0c8c0c" strokeDasharray="5 1" />
          <text x={x as number} y={(y as number) + 7} fill="#fff" fontSize="20" textAnchor="middle" fontFamily="Noto Sans, sans-serif">{t}</text>
        </g>
      ))}
      <text x="625" y="877" fill="#fff" fontSize="19" textAnchor="middle" fontFamily="Noto Sans, sans-serif">3000</text>
      <text x="528" y="766" fill="#fff" fontSize="17" textAnchor="middle" fontFamily="Noto Sans, sans-serif" transform="rotate(-90 528 766)">3000</text>
      <path d="M592 800L567 832" stroke="#888" />
      <text x="567" y="826" fill="#999" fontSize="8" fontFamily="Liberation Sans, sans-serif" transform="rotate(-50 567 826)">R800</text>
      {/* ucs */}
      <path d="M566 981V958" stroke="#00e000" strokeWidth="5" />
      <path d="M566 952l-5 10h10z" fill="#00e000" />
      <path d="M566 981H586" stroke="#f00000" strokeWidth="4" />
      <path d="M596 981l-12-5v10z" fill="#f00000" />
      <circle cx="566" cy="981" r="5" fill="#0000c0" />
      <text x="566" y="952" fill="#00e000" fontSize="14" textAnchor="middle" fontFamily="Liberation Sans, sans-serif">Y</text>
      <text x="602" y="986" fill="#f00000" fontSize="14" textAnchor="middle" fontFamily="Liberation Sans, sans-serif">X</text>
      <text x="1052" y="996" fill="#ddd" fontSize="6" fontWeight="700" textAnchor="middle" fontFamily="Noto Sans CJK SC, sans-serif">工程图 1:100</text>
    </svg>
  );
}

const OPTIONS = ['同水平管材质', 'SC', 'PC', 'PVC', 'JDG', 'KBG', '可挠金属管', '防爆钢管', '金属软管', '半硬质阻燃管'];

function PipeDialog() {
  return (
    <div className="absolute left-[313px] top-[299px] w-[262px] h-[126px] bg-white border border-[#ddd] px-[11px] pt-[10px]">
      <div className="text-[14px] leading-[20px] text-[#555]">设置桥架处立管属性</div>
      <div className="mt-[8px] h-[40px] rounded-[4px] border border-[#ccc] flex items-center pl-[7px] gap-[5px] text-[#555]">
        导管材质:
        <div className="w-[166px] h-[26px] rounded-t-[4px] border border-[#6a9be0] flex items-center justify-between pl-[5px] pr-[6px] -mt-[1px]">
          金属软管
          <span className="w-0 h-0 border-x-[3px] border-x-transparent border-b-[4px] border-b-[#666]" />
        </div>
      </div>
      <div className="absolute right-[11px] top-[87px] w-[20px] h-[26px] rounded-[3px] bg-[#2e85e6]" />
      <div className="absolute left-[75px] top-[70px] w-[167px] h-[203px] bg-white border border-[#4aa5d5] pt-px pl-[1px] z-10">
        {OPTIONS.map((o, i) => (
          <div key={o} className={`w-[149px] h-[20px] pl-[3px] leading-[20px] text-[#444] ${i === 0 ? 'bg-[#c3daf3]' : ''}`}>{o}</div>
        ))}
        <span className="absolute right-[4px] top-[16px] w-[8px] h-[107px] rounded-[4px] bg-[#cccccc]" />
      </div>
    </div>
  );
}

function ViewCube({ fill, label }: { fill?: boolean; label?: boolean }) {
  return (
    <svg viewBox="0 0 22 22" className="w-[22px] h-[22px]" fill="none" strokeWidth="1.100" stroke={fill ? B : D}>
      <path d="M2 6l5-4h13v14l-5 4H2z" fill={fill ? '#cfe4fb' : '#fff'} />
      <path d="M2 6h13v14M15 6l5-4" />
      {label && <text x="4" y="17" fontSize="7" fontWeight="700" fill={B} stroke="none" fontFamily="Liberation Sans, sans-serif">3D</text>}
    </svg>
  );
}

function ViewBar() {
  const down = <span className="flex"><Caret className="border-t-[#555] border-x-[3.5px]" /></span>;
  return (
    <div className="absolute right-0 top-0 w-[32px] h-[227px] bg-white rounded-b-sm flex flex-col items-center pt-[10px] gap-[7px]">
      <svg viewBox="0 0 22 22" className="w-[22px] h-[20px]" fill="none" stroke={B}>
        <ellipse cx="11" cy="11" rx="9.500" ry="9" stroke="#888" /><ellipse cx="11" cy="11" rx="11" ry="5" transform="rotate(-30 11 11)" />
      </svg>
      <ViewCube label />
      <ViewCube fill />
      {down}
      <ViewCube fill />
      {down}
      <svg viewBox="0 0 22 22" className="w-[20px] h-[20px]" fill="none" stroke={D}>
        <path d="M11 3a9 9 0 1 1-7 3.500" /><path d="M9 0l5 3-5 3z" fill={B} stroke="none" />
      </svg>
      {down}
      <div className="w-[26px] border-t border-[#777]" />
      <svg viewBox="0 0 22 22" className="w-[20px] h-[20px]" fill="none" stroke={D}>
        <path d="M12 20H1V1h19v13M4 6h12M4 10h10M4 14h5" /><ellipse cx="16" cy="17" rx="5" ry="3" stroke={B} /><circle cx="16" cy="17" r="1.200" fill={B} stroke="none" />
      </svg>
    </div>
  );
}

function Canvas() {
  return (
    <div className="w-[1236px] flex flex-col shrink-0 bg-black">
      <div className="flex-1 relative min-h-0">
        <CadDrawing />
        <PipeDialog />
        <ViewBar />
      </div>
      <div className="h-[27px] bg-[#2b2b2b] flex items-center shrink-0 pl-[488px] gap-[3px] text-white">
        <svg viewBox="0 0 16 16" className="w-[16px] h-[16px]" fill="none" stroke="#eee">
          <path d="M1 15l6-6M2 9.500V15h5.500M15 1L9 7M9 1.500V7h5.500" />
        </svg>
        按鼠标左键指定第一个角点，或拾取构件图元
      </div>
    </div>
  );
}

/* ---------- right panel ---------- */
function FloorRow({ t, checked }: { t: string; checked?: boolean }) {
  return (
    <div className="h-[24px] flex items-center pl-[43px] gap-[5px] text-[#999]">
      <span className="w-[14px] h-[14px] rounded-[2px] border border-[#bbb] bg-[#f0f0f0] flex items-center justify-center">
        {checked && <svg viewBox="0 0 12 12" className="w-[10px] h-[10px]" fill="none" stroke="#aaa" strokeWidth="1.500"><path d="M2 6l3 3 5-6" /></svg>}
      </span>
      {t}
    </div>
  );
}

function RightPanel() {
  return (
    <div className="ml-[5px] flex-1 flex flex-col min-w-0 border-l border-[#dcdcdc]">
      <TitleBar />
      <div className="h-[21px] bg-[#f0f0f0] pl-[9px] leading-[21px] text-[#999] shrink-0">显示设置</div>
      <div className="h-[27px] pt-[4px] pl-[3px] flex gap-[4px] items-stretch shrink-0 relative overflow-hidden">
        <div className="w-[61px] shrink-0 rounded-t-[3px] border border-b-0 border-[#ccc] text-center leading-[23px] text-[#3d87e6]">楼层显示</div>
        <div className="w-[59px] shrink-0 rounded-t-[3px] bg-[#dcdcdc] text-center leading-[23px] text-[#777]">分层显示</div>
        <div className="w-[60px] shrink-0 rounded-t-[3px] bg-[#dcdcdc] pl-[6px] leading-[23px] text-[#777] whitespace-nowrap">图元显示</div>
        <span className="absolute left-[142px] top-[7px] w-0 h-0 border-y-[6px] border-y-transparent border-r-[6px] border-r-[#999]" />
        <span className="absolute left-[157px] top-[7px] w-0 h-0 border-y-[6px] border-y-transparent border-l-[6px] border-l-[#333]" />
      </div>
      <div className="h-[30px] flex items-center pl-[7px] border-b border-[#ccc] shrink-0 text-black">
        {['当', '相', '自', '全'].map((t, i) => (
          <div key={t} className="w-[41px] shrink-0 flex items-center gap-[6px]">
            <span className="w-[14px] h-[14px] rounded-full border border-[#999] flex items-center justify-center">
              {i === 0 && <span className="w-[8px] h-[8px] rounded-full bg-[#2f80ed]" />}
            </span>
            {t}
          </div>
        ))}
      </div>
      <div className="h-[750px] mx-px border-x-2 border-b-2 border-[#d0d0d0] pt-[4px] shrink-0">
        <div className="h-[24px] flex items-center pl-[11px] text-[#999]">
          <Caret className="border-t-[#777]" />
          <span className="ml-[6px] w-[14px] h-[14px] rounded-[2px] border border-[#bbb] bg-[#f0f0f0] flex items-center justify-center"><span className="w-[8px] h-[8px] border border-[#ccc]" /></span>
          <span className="ml-[7px]">全部楼层</span>
        </div>
        {['第5层', '第4层', '第3层', '第2层', '首层', '第-1层', '基础层'].map((f) => (
          <FloorRow key={f} t={f} checked={f === '第2层'} />
        ))}
      </div>
      <div className="flex items-center pl-[2px] gap-[4px] pt-[13px] text-[#444] whitespace-nowrap">
        <span className="w-[14px] h-[14px] rounded-[2px] border border-[#999]" />其他单项工程图元亮显
      </div>
    </div>
  );
}

/* ---------- status bar ---------- */
function SBtn({ width, on, caret, children }: { width: string; on?: boolean; caret?: boolean; children: React.ReactNode }) {
  return (
    <div className={`${width} h-[24px] rounded-[3px] border flex items-center justify-center gap-[4px] shrink-0 ${on ? 'border-[#4a90e8]' : 'border-[#999]'}`}>
      {children}
      {caret && <span className="flex"><Caret className="border-t-[#555]" /></span>}
    </div>
  );
}

function StatusBar() {
  return (
    <div className="h-[30px] bg-[#f9f9f9] flex items-center shrink-0 relative text-[#444]">
      <span className="w-[122px] pl-[3px]">层高：3.9</span>
      <span className="w-[140px]">底标高：3.9</span>
      <span className="w-[110px]">选中图元：3(4)</span>
      <span className="w-[106px]">隐藏图元：0</span>
      <div className="flex items-center gap-[4px] ml-[2px]">
        <SBtn width="w-[24px]"><svg viewBox="0 0 16 16" className="w-4 h-4" fill="none" stroke={D}><path d="M2 2h5M2 5h5M2 8h5M9 2h5v5H9zM2 10h6v4H2zM5 10v4" /><circle cx="12" cy="12" r="2" stroke={B} /></svg></SBtn>
        <SBtn width="w-[24px]"><svg viewBox="0 0 16 16" className="w-4 h-4" fill="none" stroke={D}><path d="M3 2v11h11M3 8h5v5" /></svg></SBtn>
        <SBtn width="w-[36px]" on caret><svg viewBox="0 0 16 16" className="w-4 h-4" fill="none"><rect x="2" y="2" width="12" height="12" rx="1" stroke={D} /><circle cx="2" cy="2" r="1.300" fill="#fff" stroke={B} /></svg></SBtn>
        <SBtn width="w-[35px]" caret><svg viewBox="0 0 16 16" className="w-4 h-4" fill="none" stroke={D}><path d="M8 1l6 3.500v7L8 15l-6-3.500v-7zM2 4.500L8 8l6-3.500M8 8v7" /></svg></SBtn>
        <SBtn width="w-[25px]"><svg viewBox="0 0 16 16" className="w-4 h-4" fill="none" stroke="#aaa"><path d="M2 2l12 12M14 2L2 14" /></svg></SBtn>
        <SBtn width="w-[36px]" caret><svg viewBox="0 0 16 16" className="w-4 h-4" fill="none" stroke={D}><path d="M2 13L12 4M2 13h12" /><path d="M9 13a7 7 0 0 0-2-4" stroke={B} /></svg></SBtn>
        <SBtn width="w-[36px]" caret><svg viewBox="0 0 16 16" className="w-4 h-4" fill="none" stroke={D}><path d="M3 1v6M0 4h6" /><rect x="5" y="9" width="10" height="4" fill={D} /></svg></SBtn>
        <SBtn width="w-[25px]"><svg viewBox="0 0 16 16" className="w-4 h-4" fill="none" stroke={D}><rect x="2" y="2" width="9" height="10" /><rect x="4" y="4" width="9" height="9" fill={D} /><path d="M12 10l3 3-3 2z" fill={D} /></svg></SBtn>
        <SBtn width="w-[25px]"><svg viewBox="0 0 16 16" className="w-4 h-4" fill="none" stroke={D}><path d="M2 14C3 8 8 4 14 2" /><circle cx="14" cy="2" r="1" stroke={B} /><path d="M10 10l4 3-4 2z" fill={D} stroke="none" /></svg></SBtn>
      </div>
      <span className="ml-[2px] w-[111px] whitespace-nowrap">CAD图亮度：100%</span>
      <div className="flex items-center">
        <SBtn width="w-[25px]"><svg viewBox="0 0 16 16" className="w-4 h-4" fill="none" stroke={D}><circle cx="8" cy="8" r="6" /><path d="M5 8h6" /></svg></SBtn>
        <div className="w-[45px] flex items-center justify-end relative">
          <div className="absolute left-0 right-0 h-[2px] bg-[#ccc]" />
          <span className="w-[9px] h-[20px] rounded-[2px] border border-[#666] bg-[#f4f4f4] relative" />
        </div>
        <SBtn width="w-[25px]"><svg viewBox="0 0 16 16" className="w-4 h-4" fill="none" stroke={B}><circle cx="8" cy="8" r="6" stroke={D} /><path d="M5 8h6M8 5v6" /></svg></SBtn>
      </div>
    </div>
  );
}

export default function App() {
  return (
    <div className="w-[1928px] h-[1062px] flex overflow-hidden bg-black text-[12px] font-['Noto_Sans','Noto_Sans_CJK_SC',sans-serif]">
      {/* sliver of the window behind */}
      <div className="w-[8px] flex flex-col shrink-0">
        <div className="h-[58px] bg-[#e6e2dc]" />
        <div className="h-[25px] bg-[#f6f6f6]" />
        <div className="h-[889px] bg-black" />
        <div className="h-[28px] bg-white border-y border-r border-black" />
        <div className="h-[23px] bg-[#222]" />
        <div className="flex-1 bg-[#1a5fc4]" />
      </div>
      <div className="flex-1 flex flex-col min-w-0">
        <MenuBar />
        <Ribbon />
        <ComboBar />
        <div className="h-[881px] flex bg-white shrink-0">
          <NavPanel />
          <div className="w-[5px] shrink-0" />
          <MiddlePanel />
          <div className="w-[4px] shrink-0 relative">
            <span className="absolute left-px top-[388px] w-[3px] h-[92px] bg-[#555]" />
          </div>
          <Canvas />
          <RightPanel />
        </div>
        <StatusBar />
      </div>
    </div>
  );
}
